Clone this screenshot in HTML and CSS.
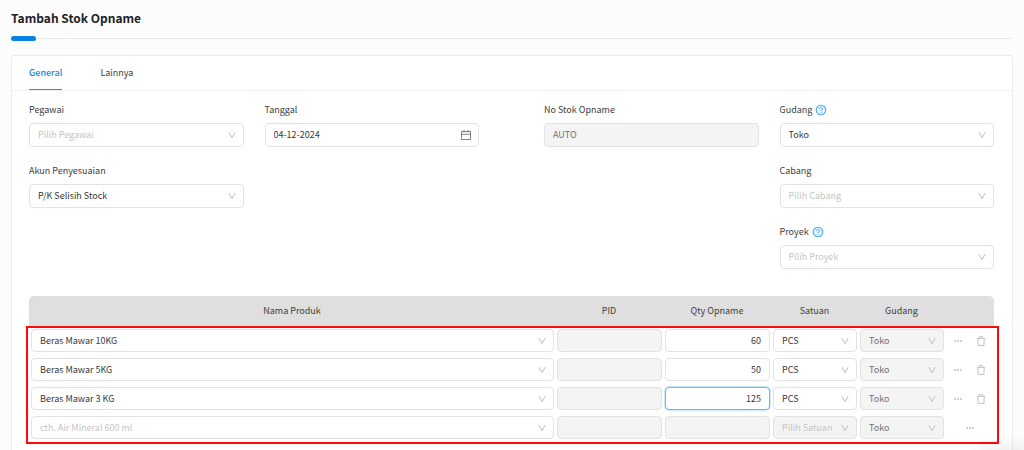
FILE: index.html
```html
<!DOCTYPE html>
<html lang="id">
<head>
<meta charset="utf-8">
<meta name="viewport" content="width=device-width, initial-scale=1">
<title>Tambah Stok Opname</title>
<link rel="stylesheet" href="styles.css">
</head>
<body>
<svg class="sprite" aria-hidden="true">
  <symbol id="chevron" viewBox="0 0 8 8"><path d="M0.8 1.2 4 6.6 7.2 1.2" fill="none" stroke="currentColor" stroke-linejoin="round"/></symbol>
  <symbol id="calendar" viewBox="0 0 10 10"><path d="M.5 1.5h9v8h-9zM.5 4.3h9M3 0v2.6M7 0v2.6" fill="none" stroke="currentColor" stroke-width=".8"/></symbol>
  <symbol id="help" viewBox="0 0 12 12"><circle cx="6" cy="6" r="4.8" fill="#e3f3ff" stroke="currentColor" stroke-width="1.1"/><path d="M4.5 4.9c0-2 3-2 3 0 0 1-1.5 1-1.500 2.100M6 8v.9" fill="none" stroke="currentColor" stroke-width="1"/></symbol>
  <symbol id="dots" viewBox="0 0 8 2"><path d="M0 .2h2v1.600H0zM3 .2h2v1.600H3zM6 .2h2v1.600H6z" fill="currentColor"/></symbol>
  <symbol id="trash" viewBox="0 0 10 10"><path d="M.8 2.400h8.400M3.200 2.200V.7h3.600v1.500M1.800 2.600l.3 6.800h5.800l.3-6.800" fill="none" stroke="currentColor"/></symbol>
</svg>

<header class="page-head">
  <h1 class="title">Tambah Stok Opname</h1>
  <div class="rule"><span class="rule-accent"></span></div>
</header>

<main class="card">
  <nav class="tabs">
    <a class="tab tab-active" href="#general">General</a>
    <a class="tab" href="#lainnya">Lainnya</a>
  </nav>

  <form class="content" id="general">
    <div class="fields">
      <div class="half">
        <div class="column">
          <div class="field">
            <label for="pegawai">Pegawai</label>
            <div class="control"><select id="pegawai" class="box empty"><option>Pilih Pegawai</option></select><svg class="chevron"><use href="#chevron"/></svg></div>
          </div>
          <div class="field">
            <label for="akun">Akun Penyesuaian</label>
            <div class="control"><select id="akun" class="box"><option>P/K Selisih Stock</option></select><svg class="chevron"><use href="#chevron"/></svg></div>
          </div>
        </div>
        <div class="column">
          <div class="field">
            <label for="tanggal">Tanggal</label>
            <div class="control"><input id="tanggal" class="box" type="text" value="04-12-2024"><svg class="calendar"><use href="#calendar"/></svg></div>
          </div>
        </div>
      </div>
      <div class="half">
        <div class="column">
          <div class="field">
            <label for="nomor">No Stok Opname</label>
            <div class="control"><input id="nomor" class="box" type="text" value="AUTO" disabled></div>
          </div>
        </div>
        <div class="column">
          <div class="field">
            <label for="gudang">Gudang <svg class="help"><use href="#help"/></svg></label>
            <div class="control"><select id="gudang" class="box"><option>Toko</option></select><svg class="chevron"><use href="#chevron"/></svg></div>
          </div>
          <div class="field">
            <label for="cabang">Cabang</label>
            <div class="control"><select id="cabang" class="box empty"><option>Pilih Cabang</option></select><svg class="chevron"><use href="#chevron"/></svg></div>
          </div>
          <div class="field">
            <label for="proyek">Proyek <svg class="help"><use href="#help"/></svg></label>
            <div class="control"><select id="proyek" class="box empty"><option>Pilih Proyek</option></select><svg class="chevron"><use href="#chevron"/></svg></div>
          </div>
        </div>
      </div>
    </div>

    <div class="items">
      <table class="table">
        <colgroup><col><col class="col-wide"><col class="col-wide"><col class="col-mid"><col class="col-mid"><col class="col-actions"></colgroup>
        <thead>
          <tr><th>Nama Produk</th><th>PID</th><th>Qty Opname</th><th>Satuan</th><th>Gudang</th><th></th></tr>
        </thead>
        <tbody>
          <tr>
            <td><div class="control"><select class="box" aria-label="Nama Produk"><option>Beras Mawar 10KG</option></select><svg class="chevron"><use href="#chevron"/></svg></div></td>
            <td><div class="control"><input class="box" type="text" aria-label="PID" disabled></div></td>
            <td><div class="control"><input class="box number" type="text" aria-label="Qty Opname" value="60"></div></td>
            <td><div class="control"><select class="box" aria-label="Satuan"><option>PCS</option></select><svg class="chevron"><use href="#chevron"/></svg></div></td>
            <td><div class="control"><select class="box" aria-label="Gudang" disabled><option>Toko</option></select><svg class="chevron"><use href="#chevron"/></svg></div></td>
            <td><div class="actions"><button type="button" aria-label="Detail"><svg class="dots"><use href="#dots"/></svg></button><button type="button" aria-label="Hapus"><svg class="trash"><use href="#trash"/></svg></button></div></td>
          </tr>
          <tr>
            <td><div class="control"><select class="box" aria-label="Nama Produk"><option>Beras Mawar 5KG</option></select><svg class="chevron"><use href="#chevron"/></svg></div></td>
            <td><div class="control"><input class="box" type="text" aria-label="PID" disabled></div></td>
            <td><div class="control"><input class="box number" type="text" aria-label="Qty Opname" value="50"></div></td>
            <td><div class="control"><select class="box" aria-label="Satuan"><option>PCS</option></select><svg class="chevron"><use href="#chevron"/></svg></div></td>
            <td><div class="control"><select class="box" aria-label="Gudang" disabled><option>Toko</option></select><svg class="chevron"><use href="#chevron"/></svg></div></td>
            <td><div class="actions"><button type="button" aria-label="Detail"><svg class="dots"><use href="#dots"/></svg></button><button type="button" aria-label="Hapus"><svg class="trash"><use href="#trash"/></svg></button></div></td>
          </tr>
          <tr>
            <td><div class="control"><select class="box" aria-label="Nama Produk"><option>Beras Mawar 3 KG</option></select><svg class="chevron"><use href="#chevron"/></svg></div></td>
            <td><div class="control"><input class="box" type="text" aria-label="PID" disabled></div></td>
            <td><div class="control"><input class="box number editing" type="text" aria-label="Qty Opname" value="125"></div></td>
            <td><div class="control"><select class="box" aria-label="Satuan"><option>PCS</option></select><svg class="chevron"><use href="#chevron"/></svg></div></td>
            <td><div class="control"><select class="box" aria-label="Gudang" disabled><option>Toko</option></select><svg class="chevron"><use href="#chevron"/></svg></div></td>
            <td><div class="actions"><button type="button" aria-label="Detail"><svg class="dots"><use href="#dots"/></svg></button><button type="button" aria-label="Hapus"><svg class="trash"><use href="#trash"/></svg></button></div></td>
          </tr>
          <tr>
            <td><div class="control"><select class="box empty" aria-label="Nama Produk"><option>cth. Air Mineral 600 ml</option></select><svg class="chevron"><use href="#chevron"/></svg></div></td>
            <td><div class="control"><input class="box" type="text" aria-label="PID" disabled></div></td>
            <td><div class="control"><input class="box number" type="text" aria-label="Qty Opname" disabled></div></td>
            <td><div class="control"><select class="box empty" aria-label="Satuan" disabled><option>Pilih Satuan</option></select><svg class="chevron"><use href="#chevron"/></svg></div></td>
            <td><div class="control"><select class="box" aria-label="Gudang" disabled><option>Toko</option></select><svg class="chevron"><use href="#chevron"/></svg></div></td>
            <td><div class="actions"><button type="button" aria-label="Detail"><svg class="dots"><use href="#dots"/></svg></button></div></td>
          </tr>
        </tbody>
      </table>
      <div class="highlight"></div>
    </div>
  </form>
</main>
<div class="corner-shade"></div>
</body>
</html>
```
FILE: styles.css
```css
* { box-sizing: border-box; }

body {
  margin: 0;
  min-height: 100vh;
  display: flex;
  flex-direction: column;
  padding: 0 11px;
  background: #fcfcfc;
  color: #404040;
  font: 9px/16px "Noto Sans CJK SC", "Noto Sans", sans-serif;
}

.sprite { position: absolute; width: 0; height: 0; }

.page-head { padding: 8px 0 14px; }

.title {
  margin: 0 0 8px;
  color: #222;
  font-size: 12px;
  font-weight: 700;
  line-height: 20px;
}

.rule {
  display: flex;
  align-items: center;
  height: 5px;
  background: linear-gradient(#ececec, #ececec) center / 100% 1px no-repeat;
}

.rule-accent {
  width: 25px;
  height: 5px;
  border-radius: 3px;
  background: #0983e3;
}

.card {
  flex: 1;
  border: 1px solid #ededed;
  border-bottom: 0;
  border-radius: 3px 3px 0 0;
  background: #fff;
}

.tabs {
  display: flex;
  gap: 38px;
  padding: 0 17px;
  border-bottom: 1px solid #f1f1f1;
}

.tab {
  height: 34px;
  padding-top: 9px;
  color: #404040;
  text-decoration: none;
}

.tab-active {
  border-bottom: 1px solid #1890ff;
  color: #1687e0;
  font-weight: 500;
}

.content { padding: 11px 18px 0 17px; }

.fields {
  display: grid;
  grid-template-columns: 1fr 1fr;
  gap: 65px;
}

.half {
  display: grid;
  grid-template-columns: 1fr 1fr;
  gap: 21px;
}

.column {
  display: flex;
  flex-direction: column;
  gap: 16px;
}

.field {
  display: flex;
  flex-direction: column;
  gap: 5px;
}

.field label {
  display: flex;
  align-items: center;
  gap: 3px;
}

.help { width: 12px; height: 12px; color: #45a9f3; }

.control { display: grid; align-items: center; }
.control > * { grid-area: 1 / 1; }

.box {
  width: 100%;
  height: 24px;
  margin: 0;
  padding: 0 8px;
  border: 1px solid #e2e2e2;
  border-radius: 4px;
  outline: 0;
  appearance: none;
  background: #fff;
  color: #383838;
  font: inherit;
}

input.box { padding-bottom: 1px; }

.box:disabled { background: #f4f4f4; color: #707070; opacity: 1; }
.box.empty { color: #c4c4c4; }
.number { text-align: right; }
.editing { border-color: #67b9f2; box-shadow: 0 0 0 1px #cce8fb; }

.chevron,
.calendar {
  justify-self: end;
  width: 8px;
  height: 8px;
  margin-right: 8px;
  color: #bdbdbd;
  pointer-events: none;
}

.calendar { width: 10px; height: 10px; color: #666; }

.items { position: relative; margin-top: 27px; }

.table {
  width: 100%;
  table-layout: fixed;
  border-collapse: separate;
  border-spacing: 0;
}

.col-wide { width: 108px; }
.col-mid { width: 87px; }
.col-actions { width: 49px; }

th {
  height: 30px;
  padding: 0;
  background: #dfdfdf;
  font-weight: 400;
}

th:first-child { border-top-left-radius: 5px; }
th:last-child { border-top-right-radius: 5px; }

td { height: 29px; padding: 0 1px 0 2px; }
td .box { height: 23px; }

.actions {
  display: flex;
  align-items: center;
  justify-content: center;
  gap: 14px;
}

.actions button {
  display: flex;
  padding: 0;
  border: 0;
  background: none;
  color: #c2c2c2;
}

.dots { width: 8px; height: 2px; }
.trash { width: 10px; height: 10px; }

.highlight {
  position: absolute;
  inset: 30px -5px -2px -3px;
  border: 2px solid #ff0a0a;
  pointer-events: none;
}

.corner-shade {
  position: fixed;
  right: 0;
  bottom: 0;
  width: 60px;
  height: 16px;
  background: radial-gradient(ellipse at 70% 130%, #00000012, transparent 70%);
  pointer-events: none;
}
```
